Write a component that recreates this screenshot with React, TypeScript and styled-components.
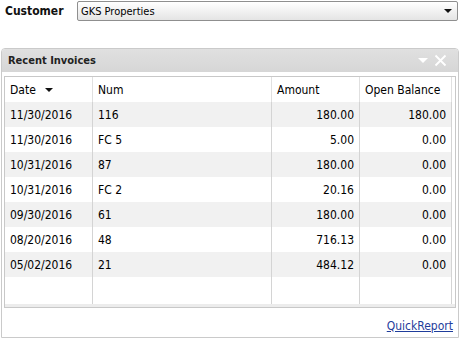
import React from "react";
import styled, { createGlobalStyle } from "styled-components";

interface IInvoice {
  date: string;
  num: string;
  amount: string;
  open: string;
}

const invoices: IInvoice[] = [
  { date: "11/30/2016", num: "116", amount: "180.00", open: "180.00" },
  { date: "11/30/2016", num: "FC 5", amount: "5.00", open: "0.00" },
  { date: "10/31/2016", num: "87", amount: "180.00", open: "0.00" },
  { date: "10/31/2016", num: "FC 2", amount: "20.16", open: "0.00" },
  { date: "09/30/2016", num: "61", amount: "180.00", open: "0.00" },
  { date: "08/20/2016", num: "48", amount: "716.13", open: "0.00" },
  { date: "05/02/2016", num: "21", amount: "484.12", open: "0.00" },
];

const GlobalStyle = createGlobalStyle`
  html, body {
    margin: 0;
    padding: 0;
    background: #ffffff;
    font-family: "DejaVu Sans Condensed", "DejaVu Sans", sans-serif;
    color: #000;
  }
`;

const Page = styled.div`
  width: 460px;
  height: 338px;
  overflow: hidden;
`;

const CustomerRow = styled.div`
  display: flex;
  align-items: center;
  height: 20px;
  margin-top: 1px;
  padding-left: 5px;
`;

const Label = styled.label`
  width: 72px;
  font-size: 12px;
  font-weight: bold;
  color: #111;
`;

const Select = styled.div`
  flex: 0 0 381px;
  height: 20px;
  box-sizing: border-box;
  display: flex;
  align-items: center;
  justify-content: space-between;
  padding: 0 5px 0 3px;
  border: 1px solid #8f8f8f;
  border-radius: 2px;
  background: linear-gradient(#ffffff, #f2f2f2 50%, #e4e4e4);
  font-size: 11px;
  color: #000;
`;

const Caret = styled.span<{ $color: string; $size: number }>`
  width: 0;
  height: 0;
  border-left: ${(p) => p.$size}px solid transparent;
  border-right: ${(p) => p.$size}px solid transparent;
  border-top: ${(p) => p.$size}px solid ${(p) => p.$color};
`;

const Panel = styled.div`
  margin: 27px 0 0 1px;
  width: 458px;
  height: 290px;
  box-sizing: border-box;
  border: 1px solid #cacaca;
  border-radius: 4px 4px 0 0;
  display: flex;
  flex-direction: column;
`;

const PanelHeader = styled.div`
  height: 23px;
  display: flex;
  align-items: center;
  justify-content: space-between;
  padding: 0 11px 0 6px;
  background: linear-gradient(#e0e0e0, #d6d6d6);
  border-radius: 3px 3px 0 0;
`;

const Title = styled.span`
  font-size: 11px;
  font-weight: bold;
  color: #222;
`;

const HeaderTools = styled.div`
  display: flex;
  align-items: center;
  gap: 6px;
`;

const PanelBody = styled.div`
  flex: 1;
  padding: 4px 2px 0 2px;
  display: flex;
  flex-direction: column;
`;

const GridBox = styled.div`
  border: 1px solid #c8c8c8;
  background: #fff;
  display: flex;
  flex-direction: column;
`;

const Table = styled.table`
  border-collapse: separate;
  border-spacing: 0;
  table-layout: fixed;
  width: 447px;
  font-size: 12px;
`;

const HeadCell = styled.th<{ $w: number }>`
  width: ${(p) => p.$w}px;
  box-sizing: border-box;
  height: 25px;
  padding: 0 5px;
  text-align: left;
  font-weight: normal;
  color: #000;
  border-right: 1px solid #e0e0e0;
  white-space: nowrap;
`;

const Row = styled.tr<{ $alt: boolean }>`
  background: ${(p) => (p.$alt ? "#f1f1f1" : "#ffffff")};
`;

const Cell = styled.td<{ $right?: boolean }>`
  height: 25px;
  padding: 0 5px;
  box-sizing: border-box;
  text-align: ${(p) => (p.$right ? "right" : "left")};
  border-right: 1px solid #d4d4d4;
  white-space: nowrap;
`;

const FillCell = styled.td`
  height: 27px;
  padding: 0;
  border-right: 1px solid #d4d4d4;
`;

const ScrollStrip = styled.div`
  height: 3px;
  background: #ececec;
`;

const SortArrow = styled.span`
  display: inline-block;
  margin-left: 9px;
  vertical-align: 2px;
  border-left: 4px solid transparent;
  border-right: 4px solid transparent;
  border-top: 4px solid #111;
`;

const Footer = styled.div`
  flex: 1;
  display: flex;
  justify-content: flex-end;
  align-items: flex-end;
  padding: 0 3px 4px 0;
`;

const Link = styled.a`
  font-size: 12px;
  color: #1f3d9b;
  text-decoration: underline;
  cursor: pointer;
`;

const CloseIcon = () => (
  <svg width="13" height="13" viewBox="0 0 13 13">
    <path d="M1.5 1.5 L11.5 11.5 M11.5 1.5 L1.5 11.5" stroke="#ffffff" strokeWidth="1.8" />
  </svg>
);

const App: React.FC = () => {
  return (
    <Page>
      <GlobalStyle />
      <CustomerRow>
        <Label>Customer</Label>
        <Select>
          <span>GKS Properties</span>
          <Caret $color="#111" $size={4} />
        </Select>
      </CustomerRow>
      <Panel>
        <PanelHeader>
          <Title>Recent Invoices</Title>
          <HeaderTools>
            <Caret $color="#ffffff" $size={5} />
            <CloseIcon />
          </HeaderTools>
        </PanelHeader>
        <PanelBody>
          <GridBox>
            <Table>
              <thead>
                <tr>
                  <HeadCell $w={88}>
                    Date
                    <SortArrow />
                  </HeadCell>
                  <HeadCell $w={179}>Num</HeadCell>
                  <HeadCell $w={88}>Amount</HeadCell>
                  <HeadCell $w={92}>Open Balance</HeadCell>
                </tr>
              </thead>
              <tbody>
                {invoices.map((inv, i) => (
                  <Row key={i} $alt={i % 2 === 0}>
                    <Cell>{inv.date}</Cell>
                    <Cell>{inv.num}</Cell>
                    <Cell $right>{inv.amount}</Cell>
                    <Cell $right>{inv.open}</Cell>
                  </Row>
                ))}
                <tr>
                  <FillCell />
                  <FillCell />
                  <FillCell />
                  <FillCell />
                </tr>
              </tbody>
            </Table>
            <ScrollStrip />
          </GridBox>
          <Footer>
            <Link>QuickReport</Link>
          </Footer>
        </PanelBody>
      </Panel>
    </Page>
  );
};

export default App;
